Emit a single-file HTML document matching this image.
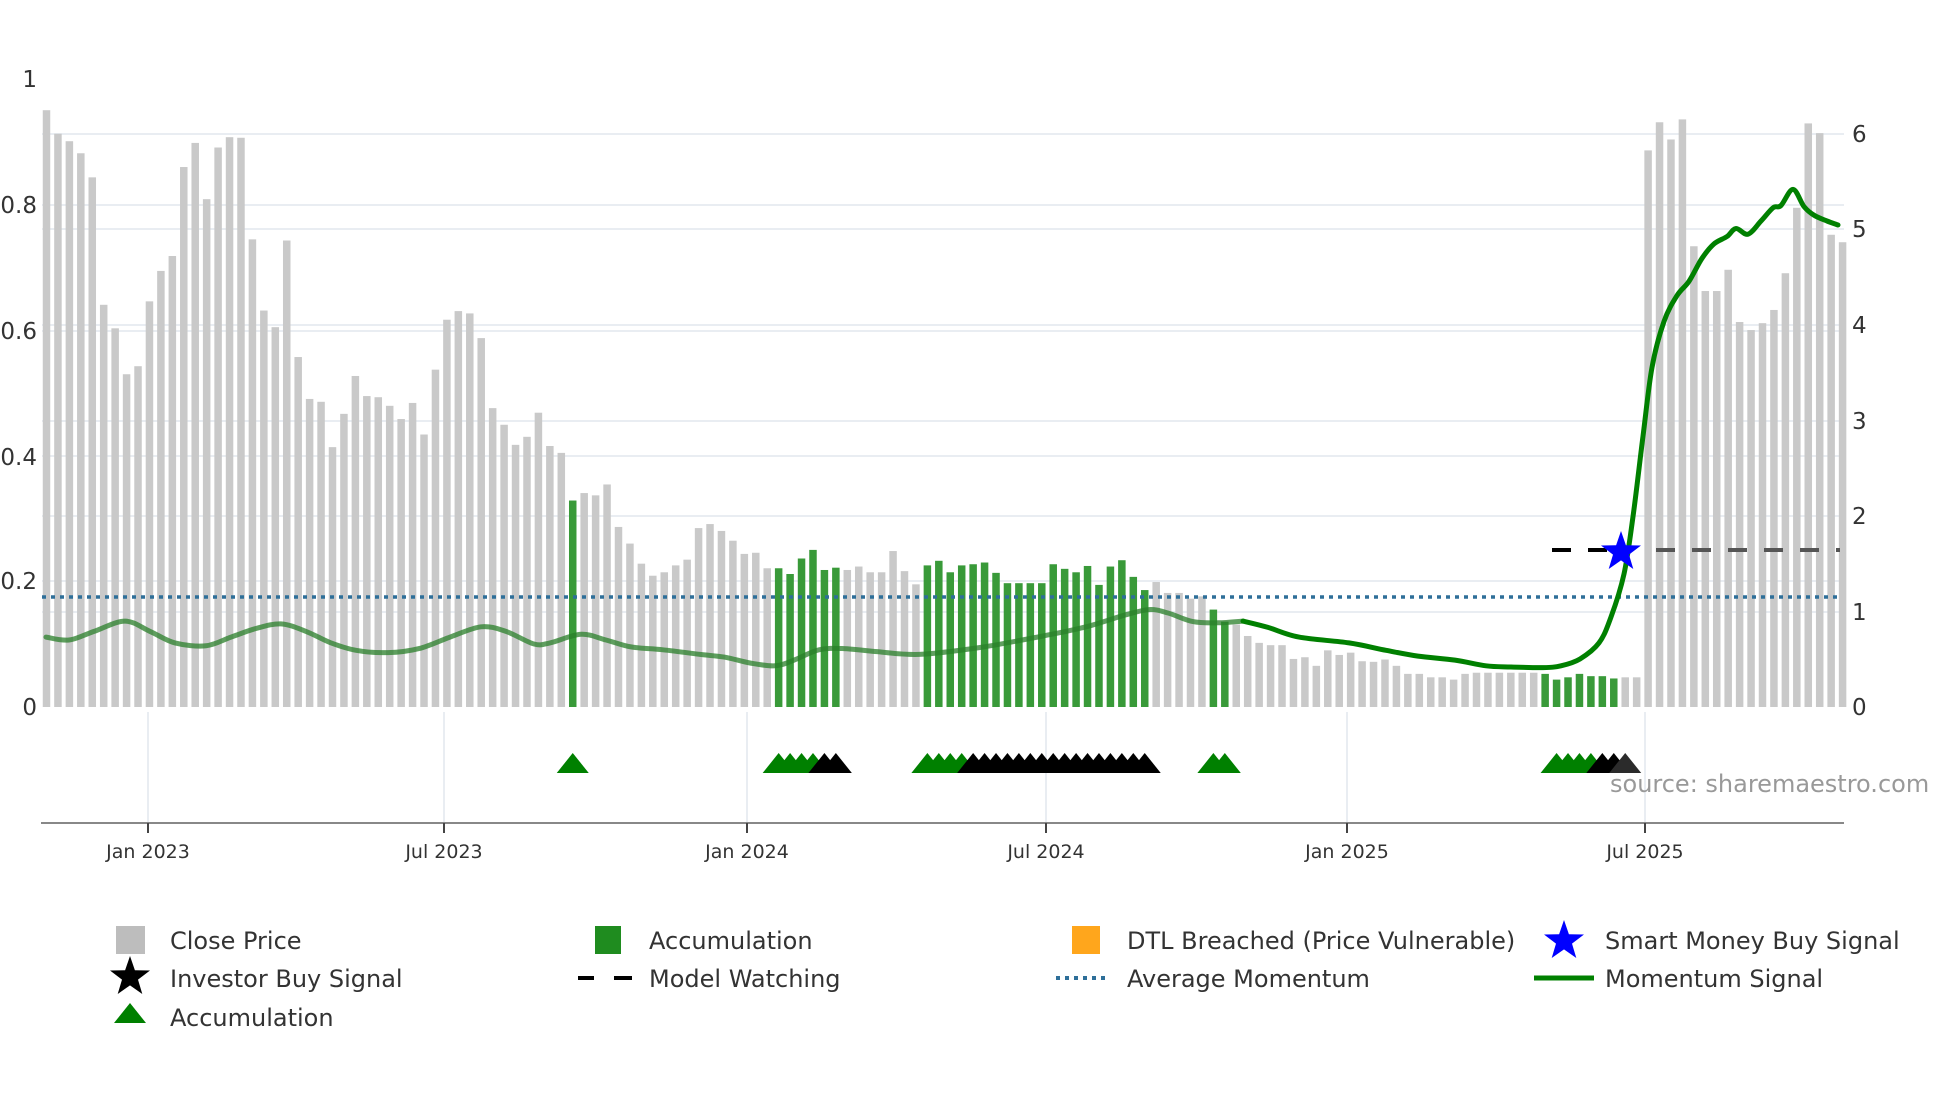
<!DOCTYPE html>
<html><head><meta charset="utf-8"><style>
html,body{margin:0;padding:0;background:#fff;}
svg{display:block;}
text{font-family:"DejaVu Sans","Liberation Sans",sans-serif;}
</style></head><body>
<svg id="c" width="1960" height="1102" viewBox="0 0 1960 1102" xmlns="http://www.w3.org/2000/svg">
<rect width="1960" height="1102" fill="#fff"/>
<g stroke="#e9edf2" stroke-width="2">
<line x1="42" x2="1844" y1="134" y2="134"/><line x1="42" x2="1844" y1="205" y2="205"/>
<line x1="42" x2="1844" y1="229" y2="229"/><line x1="42" x2="1844" y1="325" y2="325"/>
<line x1="42" x2="1844" y1="331" y2="331"/><line x1="42" x2="1844" y1="421" y2="421"/>
<line x1="42" x2="1844" y1="456" y2="456"/><line x1="42" x2="1844" y1="516" y2="516"/>
<line x1="42" x2="1844" y1="581" y2="581"/><line x1="42" x2="1844" y1="612" y2="612"/>
<line x1="148" x2="148" y1="712" y2="823"/><line x1="444" x2="444" y1="712" y2="823"/>
<line x1="747" x2="747" y1="712" y2="823"/><line x1="1046" x2="1046" y1="712" y2="823"/>
<line x1="1347" x2="1347" y1="712" y2="823"/><line x1="1645" x2="1645" y1="712" y2="823"/>
</g>
<g id="bars"></g>
<line x1="42" x2="1840" y1="597" y2="597" stroke="#2e6f99" stroke-width="3.5" stroke-dasharray="4 5"/>
<g id="mom"></g>
<line x1="1552" x2="1620" y1="550" y2="550" stroke="#000" stroke-width="4" stroke-dasharray="19 17"/>
<line x1="1656" x2="1840" y1="550" y2="550" stroke="#555" stroke-width="4" stroke-dasharray="19 17"/>
<polygon id="star" fill="#0000ff" points=""/>
<g id="tri"></g>
<text x="1610" y="792" font-size="24" fill="#999">source: sharemaestro.com</text>
<line x1="41" x2="1844" y1="823" y2="823" stroke="#888" stroke-width="2"/>
<g stroke="#444" stroke-width="2">
<line x1="148" x2="148" y1="823" y2="833"/><line x1="444" x2="444" y1="823" y2="833"/>
<line x1="747" x2="747" y1="823" y2="833"/><line x1="1046" x2="1046" y1="823" y2="833"/>
<line x1="1347" x2="1347" y1="823" y2="833"/><line x1="1645" x2="1645" y1="823" y2="833"/>
</g>
<g font-size="19" fill="#333" text-anchor="middle">
<text x="148" y="858">Jan 2023</text><text x="444" y="858">Jul 2023</text>
<text x="747" y="858">Jan 2024</text><text x="1046" y="858">Jul 2024</text>
<text x="1347" y="858">Jan 2025</text><text x="1645" y="858">Jul 2025</text>
</g>
<g font-size="23" fill="#333" text-anchor="end">
<text x="37" y="87">1</text><text x="37" y="213">0.8</text><text x="37" y="339">0.6</text>
<text x="37" y="465">0.4</text><text x="37" y="589">0.2</text><text x="37" y="715">0</text>
</g>
<g font-size="23" fill="#333">
<text x="1852" y="142">6</text><text x="1852" y="237">5</text><text x="1852" y="333">4</text>
<text x="1852" y="429">3</text><text x="1852" y="524">2</text><text x="1852" y="620">1</text><text x="1852" y="715">0</text>
</g>
<rect x="116" y="926" width="29" height="28" fill="#bdbdbd"/>
<polygon id="lstar" fill="#000" points=""/>
<polygon points="114,1023 146,1023 130,1003" fill="#008000"/>
<rect x="595" y="926" width="26" height="28" fill="#1f8c1f"/>
<line x1="578" y1="978" x2="594" y2="978" stroke="#000" stroke-width="4"/>
<line x1="614" y1="978" x2="632" y2="978" stroke="#000" stroke-width="4"/>
<rect x="1072" y="926" width="28" height="28" fill="#ffa61c"/>
<line x1="1056" y1="978" x2="1110" y2="978" stroke="#2e6f99" stroke-width="4" stroke-dasharray="4 5"/>
<polygon id="bstar" fill="#0000ff" points=""/>
<line x1="1534" y1="978" x2="1594" y2="978" stroke="#008000" stroke-width="5"/>
<g font-size="24" fill="#333">
<text x="170" y="949">Close Price</text><text x="170" y="987">Investor Buy Signal</text><text x="170" y="1026">Accumulation</text>
<text x="649" y="949">Accumulation</text><text x="649" y="987">Model Watching</text>
<text x="1127" y="949">DTL Breached (Price Vulnerable)</text><text x="1127" y="987">Average Momentum</text>
<text x="1605" y="949">Smart Money Buy Signal</text><text x="1605" y="987">Momentum Signal</text>
</g>
</svg>
<script>
var NS="http://www.w3.org/2000/svg",S=0.574;
var tops=[192,233,246,267,309,531,572,652,638,525,472,446,291,249,347,257,239,240,417,541,570,419,622,695,700,779,721,655,690,692,707,730,702,757,644,557,542,546,589,711,740,775,761,719,777,789,872,859,863,844,918,947,982,1003,997,985,975,920,913,925,942,965,963,990,990,1000,973,958,993,989,993,987,997,997,960,995,1018,985,977,997,985,983,
980,998,1016,1016,1016,1016,983,991,997,986,1019,987,976,1005,1028,1014,1033,1033,1043,1039,1062,1083,
1088,1108,1120,1124,1124,1148,1145,1160,1133,1141,1137,1152,1153,1149,1160,1174,1174,1180,1180,1184,1174,1172,1172,1172,1172,1172,1172,
1174,1184,1180,1174,1178,1178,1182,1180,1180,
262,213,243,208,429,507,507,470,561,575,563,540,476,362,215,232,409,422];
function r(a,b){var o=[];for(var i=a;i<=b;i++)o.push(i);return o;}
var green={};[47,65,66,67,68,69,70].concat(r(78,97),[103,104],r(132,138)).forEach(function(n){green[n]=1;});
function cx(n){return 46.5+(n-1)*11.44;}
var g=document.getElementById('bars');
tops.forEach(function(t,i){var n=i+1,y=t*S,e=document.createElementNS(NS,'rect');
e.setAttribute('x',cx(n)-3.75);e.setAttribute('y',y);e.setAttribute('width',7.5);e.setAttribute('height',707-y);
e.setAttribute('fill',green[n]?'#399a39':'#c9c9c9');g.appendChild(e);});
var p1=[[46,1110],[69,1115],[94,1100],[125,1082],[150,1100],[175,1120],[206,1125],[231,1110],[256,1095],[281,1087],[306,1100],[331,1120],[356,1133],[388,1137],[419,1130],[450,1110],[481,1092],[506,1100],[534,1122],[550,1120],[581,1105],[606,1115],[631,1127],[663,1132],[700,1140],[725,1145],[750,1155],[775,1160],[794,1150],[819,1132],[844,1130],[875,1135],[919,1140],[980,1128],[1043,1108],[1086,1092],[1124,1072],[1149,1062],[1168,1068],[1193,1083],[1218,1085],[1243,1082]];
var p2=[[1243,1082],[1268,1093],[1299,1110],[1349,1120],[1386,1133],[1418,1143],[1455,1150],[1486,1160],[1511,1162],[1543,1163],[1561,1160],[1580,1148],[1599,1120],[1611,1075],[1624,1000],[1633,900],[1643,760],[1652,640],[1664,560],[1677,515],[1689,490],[1702,450],[1714,425],[1727,412],[1736,398],[1748,408],[1761,385],[1773,362],[1781,358],[1793,330],[1804,360],[1814,375],[1827,385],[1838,392]];
function smooth(p){var q=p.map(function(a){return [a[0],a[1]*S];});var d='M'+q[0][0]+','+q[0][1].toFixed(1);
for(var i=0;i<q.length-1;i++){var a=q[Math.max(i-1,0)],b=q[i],c=q[i+1],e=q[Math.min(i+2,q.length-1)];
var c1x=b[0]+(c[0]-a[0])/6,c1y=b[1]+(c[1]-a[1])/6,c2x=c[0]-(e[0]-b[0])/6,c2y=c[1]-(e[1]-b[1])/6;
d+=' C'+c1x.toFixed(1)+','+c1y.toFixed(1)+' '+c2x.toFixed(1)+','+c2y.toFixed(1)+' '+c[0]+','+c[1].toFixed(1);}return d;}
function pl(p,col,w,op){var e=document.createElementNS(NS,'path');
e.setAttribute('d',smooth(p));
e.setAttribute('fill','none');e.setAttribute('stroke',col);e.setAttribute('stroke-width',w);e.setAttribute('stroke-opacity',op);
e.setAttribute('stroke-linejoin','round');e.setAttribute('stroke-linecap','round');document.getElementById('mom').appendChild(e);}
pl(p1,'#2a7f2a',5,0.75);pl(p2,'#008000',5,1);
function star(id,x,y,R){var s=[];for(var i=0;i<10;i++){var a=-Math.PI/2+i*Math.PI/5,rr=i%2?R*0.4:R;s.push((x+rr*Math.cos(a)).toFixed(1)+','+(y+rr*Math.sin(a)).toFixed(1));}
document.getElementById(id).setAttribute('points',s.join(' '));}
star('star',1621,552,21);star('lstar',130,977,21);star('bstar',1564,941,21);
var tg=document.getElementById('tri');
function tri(n,col){var x=cx(n),e=document.createElementNS(NS,'polygon');
e.setAttribute('points',(x-16)+',773 '+(x+16)+',773 '+x+',753');e.setAttribute('fill',col);tg.appendChild(e);}
tri(47,'#008000');
[65,66,67,68].forEach(function(n){tri(n,'#008000');});[69,70].forEach(function(n){tri(n,'#000');});
[78,79,80,81].forEach(function(n){tri(n,'#008000');});r(82,97).forEach(function(n){tri(n,'#000');});
[103,104].forEach(function(n){tri(n,'#008000');});
[133,134,135,136].forEach(function(n){tri(n,'#008000');});[137,138].forEach(function(n){tri(n,'#000');});tri(139,'#2b2b2b');
</script>
</body></html>
